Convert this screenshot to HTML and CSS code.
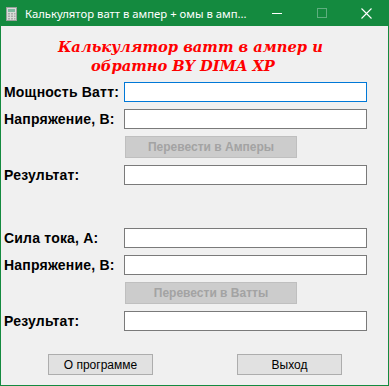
FILE: index.html
```html
<!DOCTYPE html>
<html lang="ru">
<head>
    <meta charset="UTF-8">
    <meta name="viewport" content="width=device-width, initial-scale=1.0">
    <title>Калькулятор ватт в ампер</title>
    <link rel="stylesheet" href="styles.css">
</head>
<body>
    <div class="window">
        <header class="titlebar">
            <svg class="app-icon" width="11" height="14" viewBox="0 0 11 14" aria-hidden="true">
                <rect x="0.5" y="0.5" width="10" height="13" fill="#d9dcd9" stroke="#9aa09c"/>
                <rect x="2" y="2" width="7" height="3" fill="#7fb9a0"/>
                <g fill="#a8aca9">
                    <rect x="2" y="6" width="2" height="1.5"/><rect x="5" y="6" width="2" height="1.5"/><rect x="8" y="6" width="1.5" height="1.5"/>
                    <rect x="2" y="8.5" width="2" height="1.5"/><rect x="5" y="8.5" width="2" height="1.5"/><rect x="8" y="8.5" width="1.5" height="1.5"/>
                    <rect x="2" y="11" width="2" height="1.5"/><rect x="5" y="11" width="2" height="1.5"/><rect x="8" y="11" width="1.5" height="1.5"/>
                </g>
            </svg>
            <span class="window-title">Калькулятор ватт в ампер + омы в амп...</span>
            <div class="controls">
                <span class="ctl">
                    <svg width="10" height="10" viewBox="0 0 10 10"><path d="M0 5.5h10" stroke="#fff" stroke-width="1"/></svg>
                </span>
                <span class="ctl disabled">
                    <svg width="10" height="10" viewBox="0 0 10 10"><rect x="0.5" y="0.5" width="9" height="9" fill="none" stroke="#5fae7f"/></svg>
                </span>
                <span class="ctl">
                    <svg width="11" height="11" viewBox="0 0 11 11"><path d="M0.5 0.5l10 10M10.5 0.5l-10 10" stroke="#fff" stroke-width="1.1"/></svg>
                </span>
            </div>
        </header>

        <main class="client">
            <h1 class="banner">
                <span class="line-one">Калькулятор ватт в ампер и</span>
                <span class="line-two">обратно BY DIMA XP</span>
            </h1>

            <section class="group">
                <label class="field-label">Мощность Ватт:</label>
                <input class="field focused" type="text">
                <label class="field-label">Напряжение, В:</label>
                <input class="field" type="text">
                <span></span>
                <button class="convert" disabled>Перевести в Амперы</button>
                <label class="field-label">Результат:</label>
                <input class="field" type="text">
            </section>

            <section class="group second">
                <label class="field-label">Сила тока, А:</label>
                <input class="field" type="text">
                <label class="field-label">Напряжение, В:</label>
                <input class="field" type="text">
                <span></span>
                <button class="convert" disabled>Перевести в Ватты</button>
                <label class="field-label">Результат:</label>
                <input class="field" type="text">
            </section>

            <footer class="actions">
                <button class="plain">О программе</button>
                <button class="plain">Выход</button>
            </footer>
        </main>
    </div>
</body>
</html>
```

FILE: styles.css
```css
:root {
    --frame: #148a3f;
    --face: #f0f0f0;
    --edge: #7a7a7a;
}

body {
    margin: 0;
    background: var(--face);
    font-family: "Liberation Sans", Arial, sans-serif;
}

.window {
    width: 389px;
    height: 386px;
    box-sizing: border-box;
    border: 1px solid var(--frame);
    border-top: none;
    background: var(--face);
    display: flex;
    flex-direction: column;
}

.titlebar {
    height: 26px;
    margin: 0 -1px;
    background: var(--frame);
    display: flex;
    align-items: center;
    color: #fff;
}

.app-icon {
    flex-shrink: 0;
    margin-left: 6px;
    margin-top: 1px;
}

.window-title {
    flex-shrink: 0;
    margin-left: 8px;
    font-family: "Noto Sans", sans-serif;
    font-size: 11.3px;
    white-space: nowrap;
}

.controls {
    flex-shrink: 0;
    margin-left: auto;
    display: flex;
    height: 100%;
}

.ctl {
    width: 45px;
    display: flex;
    align-items: center;
    justify-content: center;
}

.client {
    flex: 1;
    padding-left: 3px;
}

.banner {
    margin: 0;
    padding-top: 11px;
    height: 45px;
    font-family: "DejaVu Serif", serif;
    font-weight: bold;
    font-style: italic;
    font-size: 14.7px;
    line-height: 19px;
    color: #ff0000;
}

.banner span {
    display: block;
    white-space: nowrap;
}

.line-one {
    padding-left: 54px;
}

.line-two {
    padding-left: 87px;
}

.group {
    display: grid;
    grid-template-columns: 120px 243px;
    grid-template-rows: 20px 20px 22px 20px;
    row-gap: 7px;
    align-items: center;
}

.group.second {
    margin-top: 43px;
}

.field-label {
    font-weight: bold;
    font-size: 14px;
    letter-spacing: 0.2px;
    color: #000;
    white-space: nowrap;
}

.field {
    box-sizing: border-box;
    width: 243px;
    height: 20px;
    margin: 0;
    border: 1px solid var(--edge);
    background: #fff;
    outline: none;
}

.field.focused {
    border-color: #0078d7;
}

.convert {
    box-sizing: border-box;
    width: 172px;
    height: 22px;
    margin-left: 1px;
    border: 1px solid #bfbfbf;
    background: #cccccc;
    color: #a3a3a3;
    font-family: "Liberation Sans", Arial, sans-serif;
    font-weight: bold;
    font-size: 12px;
    padding: 0;
}

.actions {
    margin-top: 23px;
    display: flex;
    gap: 84px;
    padding-left: 44px;
}

.plain {
    box-sizing: border-box;
    width: 105px;
    height: 21px;
    border: 1px solid #adadad;
    background: #e1e1e1;
    color: #000;
    font-family: "Liberation Sans Narrow", "Liberation Sans", Arial, sans-serif;
    font-size: 12px;
    padding: 0;
}
```
